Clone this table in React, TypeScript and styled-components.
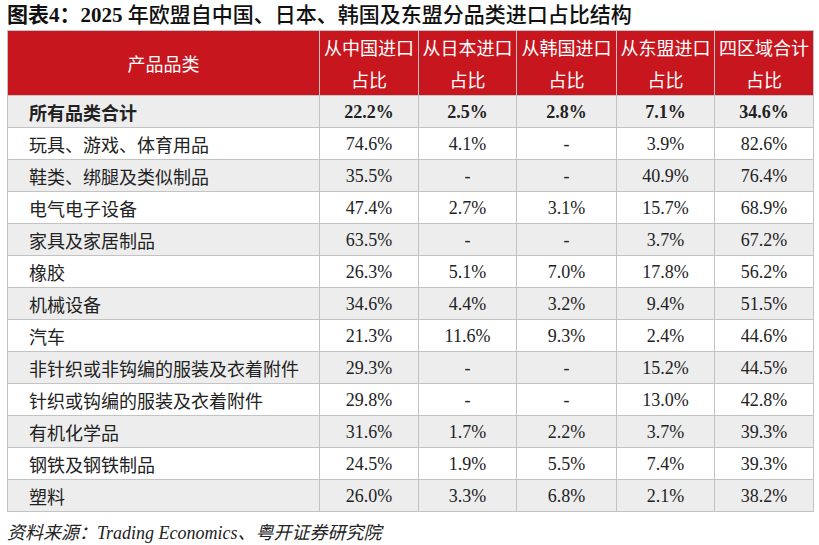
import React from "react";
import styled, { createGlobalStyle } from "styled-components";

const GlobalStyle = createGlobalStyle`
  html, body {
    margin: 0;
    padding: 0;
    background: #fff;
  }
`;

type Row = {
  name: string;
  values: string[];
};

const headers = ["从中国进口", "从日本进口", "从韩国进口", "从东盟进口", "四区域合计"];

const total: Row = {
  name: "所有品类合计",
  values: ["22.2%", "2.5%", "2.8%", "7.1%", "34.6%"],
};

const rows: Row[] = [
  { name: "玩具、游戏、体育用品", values: ["74.6%", "4.1%", "-", "3.9%", "82.6%"] },
  { name: "鞋类、绑腿及类似制品", values: ["35.5%", "-", "-", "40.9%", "76.4%"] },
  { name: "电气电子设备", values: ["47.4%", "2.7%", "3.1%", "15.7%", "68.9%"] },
  { name: "家具及家居制品", values: ["63.5%", "-", "-", "3.7%", "67.2%"] },
  { name: "橡胶", values: ["26.3%", "5.1%", "7.0%", "17.8%", "56.2%"] },
  { name: "机械设备", values: ["34.6%", "4.4%", "3.2%", "9.4%", "51.5%"] },
  { name: "汽车", values: ["21.3%", "11.6%", "9.3%", "2.4%", "44.6%"] },
  { name: "非针织或非钩编的服装及衣着附件", values: ["29.3%", "-", "-", "15.2%", "44.5%"] },
  { name: "针织或钩编的服装及衣着附件", values: ["29.8%", "-", "-", "13.0%", "42.8%"] },
  { name: "有机化学品", values: ["31.6%", "1.7%", "2.2%", "3.7%", "39.3%"] },
  { name: "钢铁及钢铁制品", values: ["24.5%", "1.9%", "5.5%", "7.4%", "39.3%"] },
  { name: "塑料", values: ["26.0%", "3.3%", "6.8%", "2.1%", "38.2%"] },
];

const App = () => {
  return (
    <Page>
      <GlobalStyle />
      <Title>
        <strong>图表4：2025</strong> 年欧盟自中国、日本、韩国及东盟分品类进口占比结构
      </Title>
      <Table>
        <colgroup>
          <col style={{ width: 312 }} />
          <col style={{ width: 99 }} />
          <col style={{ width: 98 }} />
          <col style={{ width: 100 }} />
          <col style={{ width: 98 }} />
          <col style={{ width: 99 }} />
        </colgroup>
        <thead>
          <tr>
            <HeadCell>产品品类</HeadCell>
            {headers.map((h) => (
              <HeadCell key={h}>
                {h}
                <br />
                占比
              </HeadCell>
            ))}
          </tr>
        </thead>
        <tbody>
          <BodyRow $shaded>
            <NameCell $bold>{total.name}</NameCell>
            {total.values.map((v, i) => (
              <NumCell key={i} $bold>
                {v}
              </NumCell>
            ))}
          </BodyRow>
          {rows.map((r, idx) => (
            <BodyRow key={r.name} $shaded={idx % 2 === 1}>
              <NameCell>{r.name}</NameCell>
              {r.values.map((v, i) => (
                <NumCell key={i}>{v}</NumCell>
              ))}
            </BodyRow>
          ))}
        </tbody>
      </Table>
      <Source>
        资料来源：<span className="en">Trading Economics</span>、粤开证券研究院
      </Source>
    </Page>
  );
};

export default App;

const Page = styled.div`
  width: 819px;
  height: 545px;
  padding: 0 6px 0 7px;
  box-sizing: border-box;
  background: #fff;
  font-family: "Liberation Serif", "Noto Sans CJK SC", serif;
`;

const Title = styled.h1`
  margin: 0;
  height: 30px;
  line-height: 30px;
  font-size: 21px;
  font-weight: 500;
  color: #111;
  white-space: nowrap;
  font-family: "Liberation Serif", "Noto Sans CJK SC", sans-serif;

  strong {
    font-weight: 700;
  }
`;

const Table = styled.table`
  width: 806px;
  border-collapse: collapse;
  table-layout: fixed;
`;

const HeadCell = styled.th`
  height: 62px;
  padding: 0;
  background: #c8161e;
  color: #fff;
  font-family: "Noto Sans CJK SC", sans-serif;
  font-weight: 400;
  font-size: 18px;
  line-height: 32px;
  text-align: center;
  border: 1px solid #c3c3c3;
  white-space: nowrap;
  overflow: hidden;
`;

const BodyRow = styled.tr<{ $shaded?: boolean }>`
  height: 32px;
  background: ${(p) => (p.$shaded ? "#ededed" : "#fff")};
`;

const NameCell = styled.td<{ $bold?: boolean }>`
  padding: 0 0 0 21px;
  border: 1px solid #c3c3c3;
  font-family: "Noto Sans CJK SC", sans-serif;
  font-size: 18px;
  line-height: 30px;
  font-weight: ${(p) => (p.$bold ? 700 : 400)};
  color: #222;
  white-space: nowrap;
`;

const NumCell = styled.td<{ $bold?: boolean }>`
  padding: 0;
  border: 1px solid #c3c3c3;
  text-align: center;
  font-family: "Liberation Serif", serif;
  font-size: 18px;
  line-height: 30px;
  font-weight: ${(p) => (p.$bold ? 700 : 400)};
  color: #222;
`;

const Source = styled.div`
  margin-top: 7px;
  line-height: 24px;
  font-size: 18px;
  font-style: italic;
  color: #222;
  font-family: "Noto Sans CJK SC", sans-serif;

  .en {
    font-family: "Liberation Serif", serif;
  }
`;
